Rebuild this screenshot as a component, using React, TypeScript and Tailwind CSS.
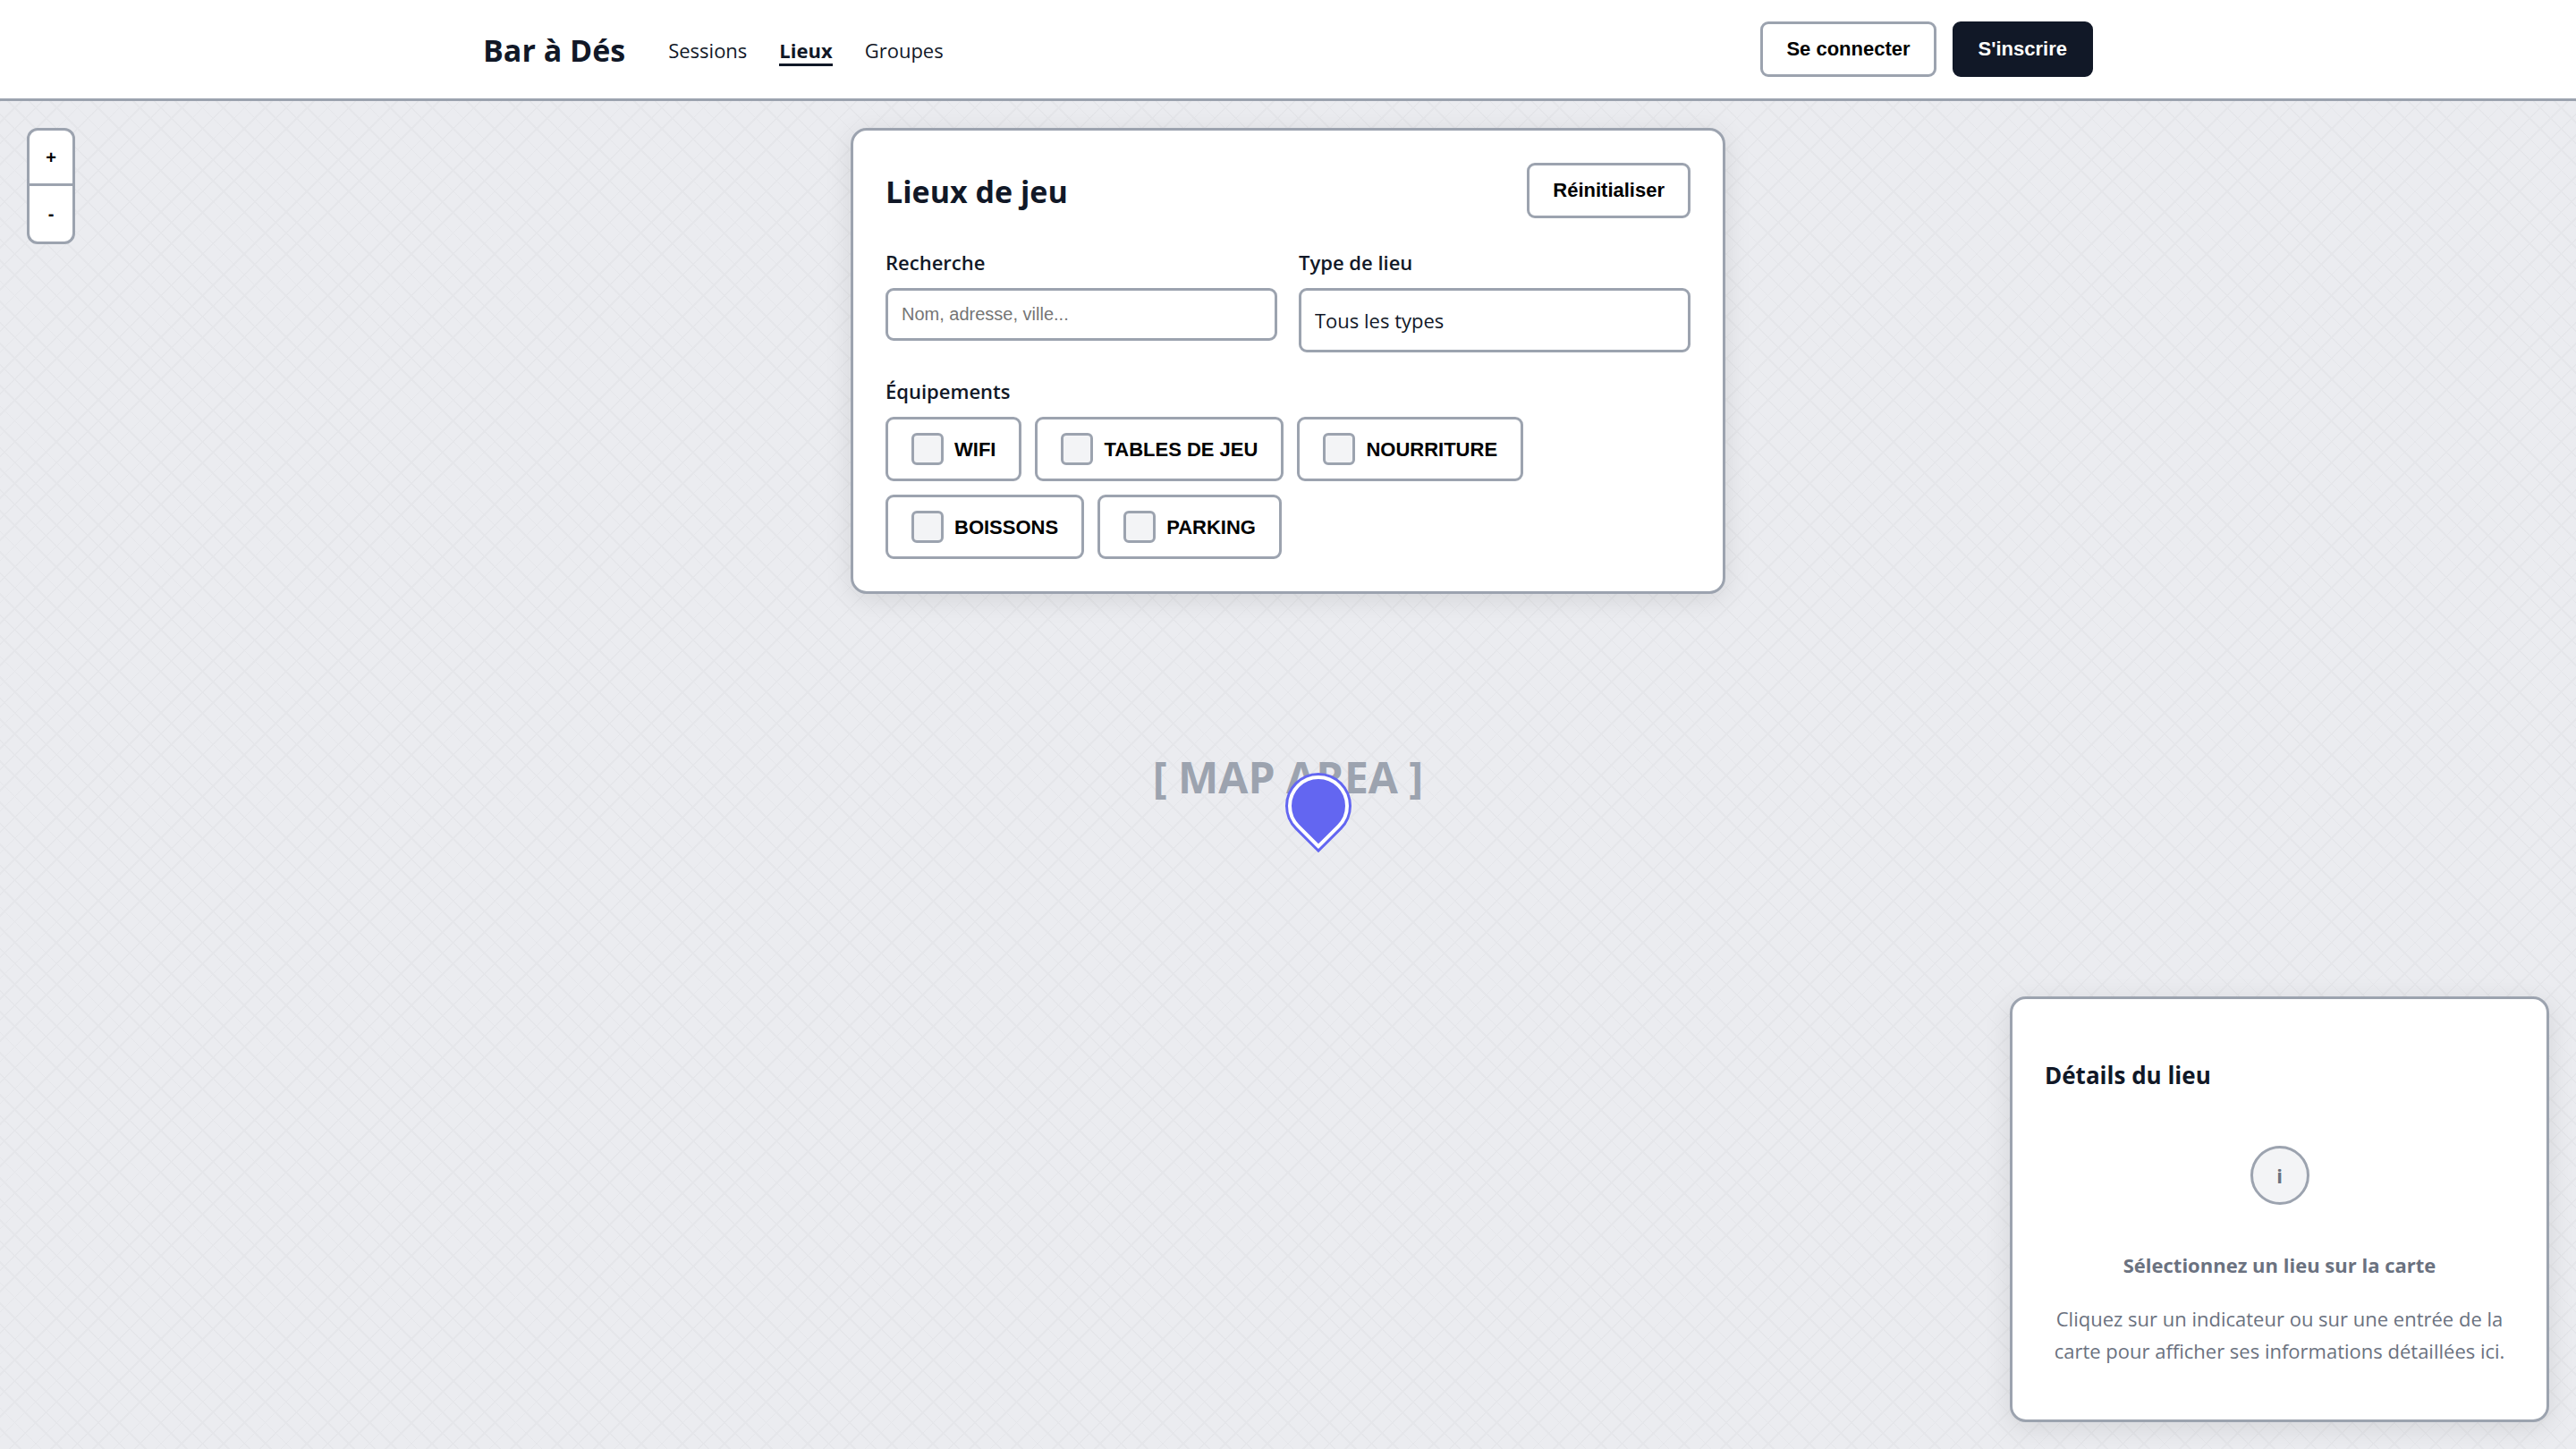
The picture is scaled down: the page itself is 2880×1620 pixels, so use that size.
import { useState, type ReactNode } from "react";
import clsx from "clsx";

const NAV = ["Sessions", "Lieux", "Groupes"];
const AMENITIES = ["WIFI", "TABLES DE JEU", "NOURRITURE", "BOISSONS", "PARKING"];
const TYPES = ["Tous les types", "Bar", "Café", "Boutique", "Association"];

function Button({ children, primary = false, onClick }: { children: ReactNode; primary?: boolean; onClick?: () => void }) {
  return (
    <button
      type="button"
      onClick={onClick}
      className={clsx(
        "h-[62px] rounded-[9px] border-3 px-[26px] pb-[2px] font-['Liberation_Sans',Arial,sans-serif] text-[22px] font-bold",
        primary ? "border-[#111827] bg-[#111827] text-white" : "border-[#9ca3af] bg-white text-black",
      )}
    >
      {children}
    </button>
  );
}

function Header() {
  return (
    <header className="border-b-3 border-[#9ca3af] bg-white">
      <div className="mx-auto flex h-[110px] max-w-[1800px] items-center justify-between">
        <div className="flex items-center gap-12 pt-[2px]">
          <a href="#" className="text-[34px] leading-[54px] font-bold">
            Bar à Dés
          </a>
          <nav>
            <ul className="flex gap-9 leading-9">
              {NAV.map((item) => (
                <li key={item}>
                  <a
                    href={`#${item.toLowerCase()}`}
                    aria-current={item === "Lieux" ? "page" : undefined}
                    className={clsx(item === "Lieux" && "border-b-3 border-[#111827] font-bold")}
                  >
                    {item}
                  </a>
                </li>
              ))}
            </ul>
          </nav>
        </div>
        <div className="flex gap-[18px]">
          <Button>Se connecter</Button>
          <Button primary>S'inscrire</Button>
        </div>
      </div>
    </header>
  );
}

function ZoomControl() {
  return (
    <div className="absolute top-[30px] left-[30px] flex w-[54px] flex-col overflow-hidden rounded-xl border-3 border-[#9ca3af] bg-white font-['Liberation_Sans',Arial,sans-serif] text-xl font-bold text-black">
      <button type="button" aria-label="Zoom avant" className="h-[62px] border-b-3 border-[#9ca3af]">
        +
      </button>
      <button type="button" aria-label="Zoom arrière" className="h-[62px]">
        -
      </button>
    </div>
  );
}

function SearchPanel() {
  const [query, setQuery] = useState("");
  const [type, setType] = useState(TYPES[0]);
  const [selected, setSelected] = useState<string[]>([]);

  const toggle = (name: string) =>
    setSelected((list) => (list.includes(name) ? list.filter((n) => n !== name) : [...list, name]));

  const reset = () => {
    setQuery("");
    setType(TYPES[0]);
    setSelected([]);
  };

  return (
    <section className="absolute top-[30px] left-1/2 w-[978px] max-w-full -translate-x-1/2 rounded-[18px] border-3 border-[#9ca3af] bg-white p-9 shadow-[0_6px_30px_rgba(0,0,0,0.1)]">
      <div className="mb-[30px] flex items-center justify-between">
        <h1 className="pt-[2px] text-[34px] leading-[54px] font-bold">Lieux de jeu</h1>
        <Button onClick={reset}>Réinitialiser</Button>
      </div>
      <div className="mb-6 grid grid-cols-2 items-start gap-6">
        <div>
          <label htmlFor="search" className="mb-[10px] block leading-[38px] font-semibold">
            Recherche
          </label>
          <input
            id="search"
            type="text"
            value={query}
            onChange={(e) => setQuery(e.target.value)}
            placeholder="Nom, adresse, ville..."
            className="block h-[59px] w-full rounded-[9px] border-3 border-[#9ca3af] bg-white px-[15px] font-['Liberation_Sans',Arial,sans-serif] text-xl placeholder:text-[#757575]"
          />
        </div>
        <div>
          <label htmlFor="type" className="mb-[10px] block leading-[38px] font-semibold">
            Type de lieu
          </label>
          <select
            id="type"
            value={type}
            onChange={(e) => setType(e.target.value)}
            className="block h-[72px] w-full appearance-none rounded-[9px] border-3 border-[#9ca3af] bg-white px-[15px]"
          >
            {TYPES.map((t) => (
              <option key={t}>{t}</option>
            ))}
          </select>
        </div>
      </div>
      <fieldset>
        <legend className="mb-[10px] leading-[38px] font-semibold">Équipements</legend>
        <div className="flex flex-wrap gap-[15px]">
          {AMENITIES.map((name) => (
            <label
              key={name}
              className="flex h-[72px] cursor-pointer items-center gap-3 rounded-[9px] border-3 border-[#9ca3af] bg-white px-[26px] font-['Liberation_Sans',Arial,sans-serif] font-bold text-black"
            >
              <input
                type="checkbox"
                checked={selected.includes(name)}
                onChange={() => toggle(name)}
                className="size-9 appearance-none rounded-md border-3 border-[#9ca3af] bg-[#f3f4f6] checked:bg-[#6366f1]"
              />
              {name}
            </label>
          ))}
        </div>
      </fieldset>
    </section>
  );
}

function DetailsPanel() {
  return (
    <aside className="absolute right-[30px] bottom-[30px] w-[603px] rounded-[18px] border-3 border-[#9ca3af] bg-white px-9 pt-16 pb-[59px] shadow-[0_6px_30px_rgba(0,0,0,0.1)]">
      <h2 className="text-[26px] leading-[42px] font-bold">Détails du lieu</h2>
      <div className="mt-[58px] flex flex-col items-center text-center text-[#6b7280]">
        <div className="flex size-[66px] items-center justify-center rounded-full border-3 border-[#9ca3af] bg-[#f3f4f6] font-bold">
          i
        </div>
        <p className="mt-[49px] leading-9 font-bold">Sélectionnez un lieu sur la carte</p>
        <p className="mt-6 leading-9">
          Cliquez sur un indicateur ou sur une entrée de la carte pour afficher ses informations détaillées ici.
        </p>
      </div>
    </aside>
  );
}

export default function App() {
  return (
    <div className="flex h-screen flex-col font-['Open_Sans','Noto_Sans',sans-serif] text-[22px] text-[#111827]">
      <Header />
      <main className="relative flex flex-1 items-center justify-center overflow-hidden bg-[#ebecf0] bg-[repeating-linear-gradient(45deg,transparent_0_15px,#e5e6ea_15px_17px,transparent_17px_32px,#e5e6ea_32px_33px),repeating-linear-gradient(-45deg,transparent_0_15px,#e5e6ea_15px_17px,transparent_17px_32px,#e5e6ea_32px_33px)]">
        <p className="pt-1 text-5xl leading-[72px] font-bold text-[#9ca3af]">[ MAP AREA ]</p>
        <button
          type="button"
          aria-label="Lieu sur la carte"
          className="absolute top-1/2 left-1/2 size-[68px] rotate-[-45deg] rounded-[50%_50%_50%_0] border-4 border-white bg-[#6366f1] shadow-[0_0_0_3px_#6366f1]"
        />
        <ZoomControl />
        <SearchPanel />
        <DetailsPanel />
      </main>
    </div>
  );
}
